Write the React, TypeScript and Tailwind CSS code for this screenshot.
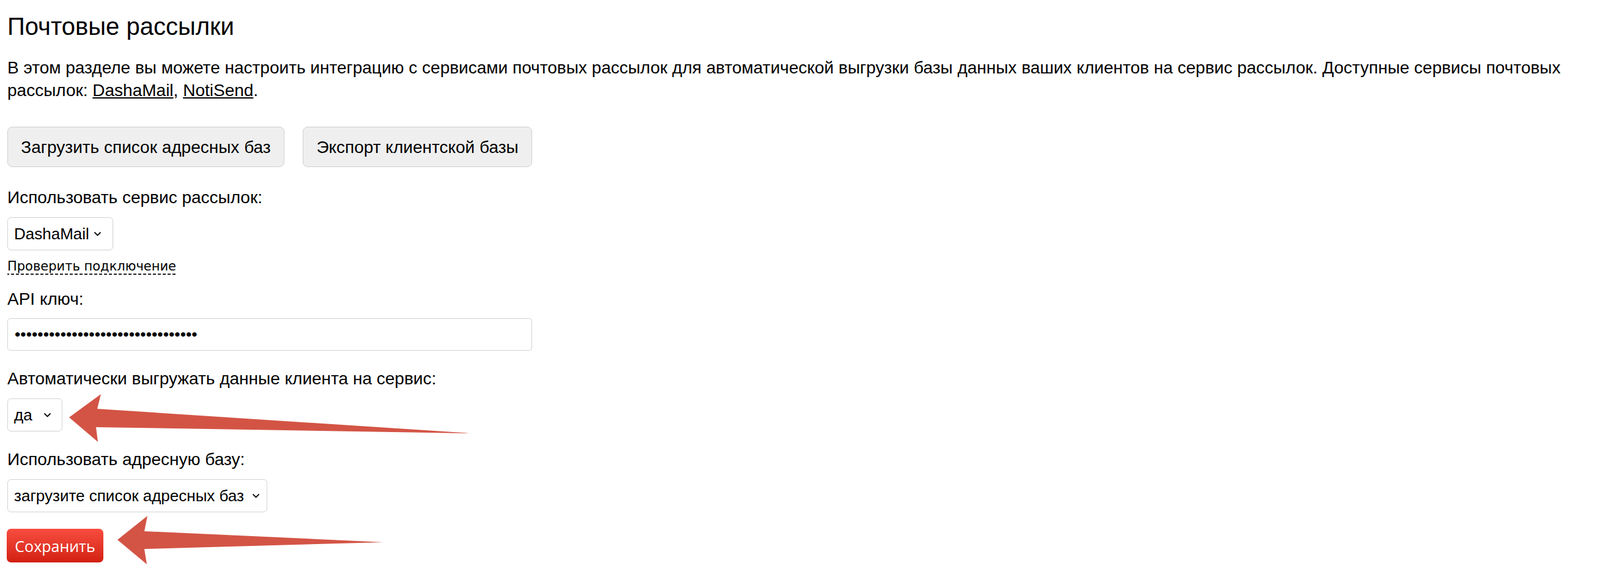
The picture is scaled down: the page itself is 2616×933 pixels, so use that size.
import React from 'react';

// Small chevron used by the fake selects
function Chevron() {
  return (
    <svg width="11" height="7" viewBox="0 0 11 7" className="shrink-0">
      <path d="M1 1 L5.5 5.5 L10 1" fill="none" stroke="#111" strokeWidth="1.8" strokeLinecap="round" strokeLinejoin="round" />
    </svg>
  );
}

function FakeSelect({ value, width, padRight }: { value: string; width: string; padRight: string }) {
  return (
    <div
      className={`flex items-center justify-between h-[54px] ${width} ${padRight} pl-[10px] border border-[#d3d3d3] rounded-[6px] bg-white text-[26px] leading-[37px] text-black whitespace-nowrap`}
    >
      <span>{value}</span>
      <Chevron />
    </div>
  );
}

function Label({ children, className = '' }: { children: React.ReactNode; className?: string }) {
  return <div className={`text-[28px] leading-[37px] text-black ${className}`}>{children}</div>;
}

export default function App() {
  return (
    <div className="relative w-[2616px] min-h-[933px] bg-white font-['Liberation_Sans',Arial,sans-serif] text-black">
      <div className="px-[12px]">
        {/* Header */}
        <h1 className="pt-[20px] text-[40px] leading-[46px] font-normal">Почтовые рассылки</h1>

        <p className="mt-[26px] text-[28px] leading-[37px]">
          В этом разделе вы можете настроить интеграцию с сервисами почтовых рассылок для автоматической выгрузки базы данных ваших клиентов на сервис рассылок. Доступные сервисы почтовых рассылок:{' '}
          <a href="#" className="underline">DashaMail</a>,{' '}
          <a href="#" className="underline">NotiSend</a>.
        </p>

        {/* Action buttons */}
        <div className="mt-[41px] flex gap-[30px]">
          <button className="h-[66px] w-[453px] flex items-center justify-center bg-[#efefef] border border-[#d0d0d0] rounded-[8px] text-[28px] leading-[37px] whitespace-nowrap">
            Загрузить список адресных баз
          </button>
          <button className="h-[66px] w-[375px] flex items-center justify-center bg-[#efefef] border border-[#d0d0d0] rounded-[8px] text-[28px] leading-[37px] whitespace-nowrap">
            Экспорт клиентской базы
          </button>
        </div>

        {/* Service */}
        <Label className="mt-[31px]">Использовать сервис рассылок:</Label>
        <div className="mt-[14px]">
          <FakeSelect value="DashaMail" width="w-[173px]" padRight="pr-[19px]" />
        </div>
        <div className="mt-[13px] h-[27px]">
          <a
            href="#"
            className="inline-block pb-[1px] font-['DejaVu_Sans',Verdana,sans-serif] text-[21px] leading-[26px] bg-[linear-gradient(to_right,#222_5px,transparent_5px)] bg-[length:8px_2px] bg-repeat-x bg-bottom"
          >
            Проверить подключение
          </a>
        </div>

        {/* API key */}
        <Label className="mt-[21px]">API ключ:</Label>
        <input
          type="password"
          defaultValue="abcdefghijklmnopqrstuvwxyz123456"
          className="mt-[13px] block h-[53px] w-[858px] pl-[11px] border border-[#d3d3d3] rounded-[5px] bg-white text-[26.67px] outline-none font-['Liberation_Sans',Arial,sans-serif]"
        />

        {/* Auto upload */}
        <Label className="mt-[27px]">Автоматически выгружать данные клиента на сервис:</Label>
        <div className="mt-[14px]">
          <FakeSelect value="да" width="w-[90px]" padRight="pr-[18px]" />
        </div>

        {/* Address base */}
        <Label className="mt-[27px]">Использовать адресную базу:</Label>
        <div className="mt-[14px]">
          <FakeSelect value="загрузите список адресных баз" width="w-[425px]" padRight="pr-[12px]" />
        </div>

        <button className="mt-[27px] -ml-[1px] h-[55px] w-[158px] flex items-center justify-center rounded-[7px] bg-gradient-to-b from-[#f84c3f] to-[#d21f10] text-white font-['Open_Sans',sans-serif] text-[25px] leading-[34px]">
          Сохранить
        </button>
      </div>

      {/* Annotation arrows drawn over the form */}
      <svg
        className="absolute left-0 top-0 pointer-events-none"
        width="2616"
        height="933"
        viewBox="0 0 2616 933"
      >
        <polygon points="113,682 165,644 159,668 770,708 157,698 160,722" fill="#d35445" />
        <polygon points="192,882 241,843 236,868 627,886 236,897 240,922" fill="#d35445" />
      </svg>
    </div>
  );
}
